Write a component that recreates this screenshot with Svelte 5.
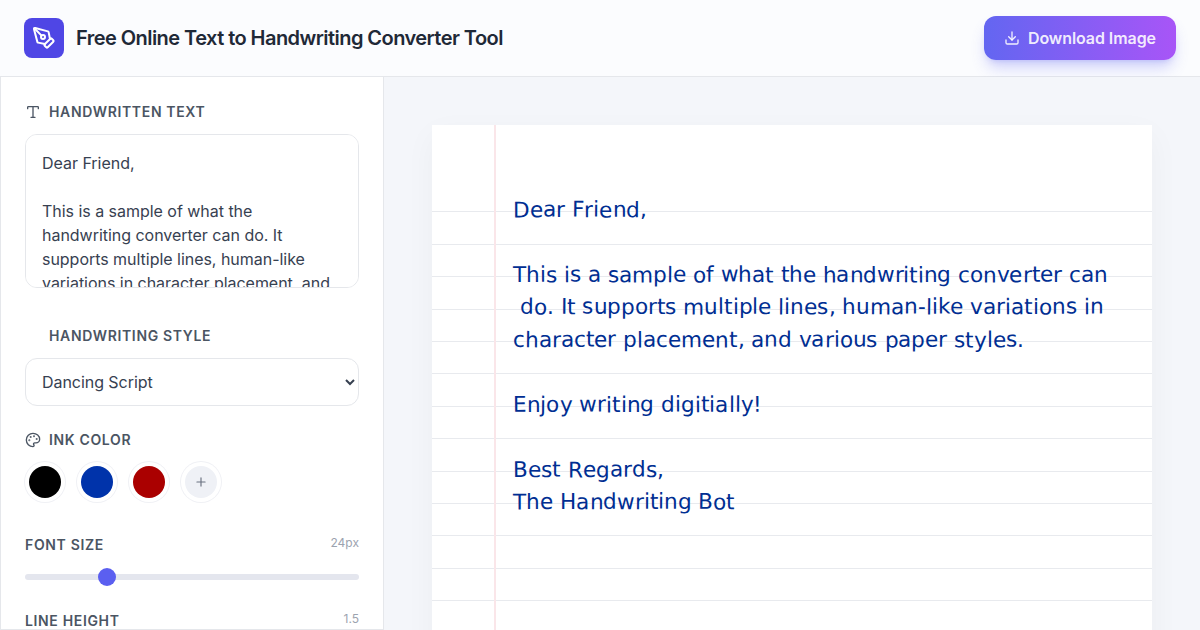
<script>
  let text = $state(`Dear Friend,

This is a sample of what the handwriting converter can do. It supports multiple lines, human-like variations in character placement, and various paper styles.

Enjoy writing digitially!

Best Regards,
The Handwriting Bot`)
  let fontSize = $state(24)
  let lineHeight = $state(1.5)
  let ink = $state('#002e92')
  const swatches = ['#000000', '#0033aa', '#aa0000']

  const paperLines = [
    { text: 'Dear Friend,', dy: -1, dx: 0 },
    { text: '', dy: 0, dx: 0 },
    { text: 'This is a sample of what the handwriting converter can', dy: 0, dx: -0.035 },
    { text: ' do. It supports multiple lines, human-like variations in', dy: -1, dx: 0 },
    { text: 'character placement, and various paper styles.', dy: 0, dx: -0.02 },
    { text: '', dy: 0, dx: 0 },
    { text: 'Enjoy writing digitially!', dy: 0, dx: 0.04 },
    { text: '', dy: 0, dx: 0 },
    { text: 'Best Regards,', dy: 0, dx: 0 },
    { text: 'The Handwriting Bot', dy: 0, dx: 0 }
  ]

  // small stable wobble per character, so the text looks hand placed
  function wobble(line, i) {
    const a = Math.sin((line + 1) * 12.9898 + i * 78.233) * 43758.5453
    const b = Math.sin((line + 1) * 39.346 + i * 11.135) * 24634.6345
    return { y: ((a - Math.floor(a)) - 0.5) * 1, r: ((b - Math.floor(b)) - 0.5) * 1.2 }
  }
</script>

<div class="app">
  <header class="topbar">
    <div class="brand">
      <div class="logo">
        <svg viewBox="0 0 24 24" width="24" height="24" fill="none" stroke="currentColor" stroke-width="2" stroke-linecap="round" stroke-linejoin="round">
          <path d="M15.707 21.293a1 1 0 0 1-1.414 0l-1.586-1.586a1 1 0 0 1 0-1.414l5.586-5.586a1 1 0 0 1 1.414 0l1.586 1.586a1 1 0 0 1 0 1.414z"/>
          <path d="m18 13-1.375-6.874a1 1 0 0 0-.746-.776L3.235 2.028a1 1 0 0 0-1.207 1.207L5.35 15.879a1 1 0 0 0 .776.746L13 18"/>
          <path d="m2.3 2.3 7.286 7.286"/>
          <circle cx="11" cy="11" r="2"/>
        </svg>
      </div>
      <h1>Free Online Text to Handwriting Converter Tool</h1>
    </div>
    <button class="download">
      <svg viewBox="0 0 24 24" width="16" height="16" fill="none" stroke="currentColor" stroke-width="2" stroke-linecap="round" stroke-linejoin="round">
        <path d="M21 15v4a2 2 0 0 1-2 2H5a2 2 0 0 1-2-2v-4"/>
        <polyline points="7 10 12 15 17 10"/>
        <line x1="12" x2="12" y1="15" y2="3"/>
      </svg>
      Download Image
    </button>
  </header>

  <div class="body">
    <aside class="sidebar">
      <section class="group text-group">
        <div class="label">
          <svg viewBox="0 0 24 24" width="16" height="16" fill="none" stroke="currentColor" stroke-width="2" stroke-linecap="round" stroke-linejoin="round">
            <path d="M12 4v16"/>
            <path d="M4 7V5a1 1 0 0 1 1-1h14a1 1 0 0 1 1 1v2"/>
            <path d="M9 20h6"/>
          </svg>
          <span>Handwritten Text</span>
        </div>
        <textarea bind:value={text}></textarea>
      </section>

      <section class="group">
        <div class="label">
          <span class="icon-gap"></span>
          <span>Handwriting Style</span>
        </div>
        <select>
          <option>Dancing Script</option>
          <option>Caveat</option>
          <option>Indie Flower</option>
        </select>
      </section>

      <section class="group">
        <div class="label">
          <svg viewBox="0 0 24 24" width="16" height="16" fill="none" stroke="currentColor" stroke-width="2" stroke-linecap="round" stroke-linejoin="round">
            <circle cx="13.5" cy="6.5" r=".5" fill="currentColor"/>
            <circle cx="17.5" cy="10.5" r=".5" fill="currentColor"/>
            <circle cx="8.5" cy="7.5" r=".5" fill="currentColor"/>
            <circle cx="6.5" cy="12.5" r=".5" fill="currentColor"/>
            <path d="M12 2C6.5 2 2 6.5 2 12s4.5 10 10 10c.926 0 1.648-.746 1.648-1.688 0-.437-.18-.835-.437-1.125-.29-.289-.438-.652-.438-1.125a1.64 1.64 0 0 1 1.668-1.668h1.996c3.051 0 5.555-2.503 5.555-5.554C21.965 6.012 17.461 2 12 2z"/>
          </svg>
          <span>Ink Color</span>
        </div>
        <div class="swatches">
          {#each swatches as c}
            <button class="swatch" style:background={c} aria-label={c} onclick={() => (ink = c)}></button>
          {/each}
          <button class="swatch add" aria-label="Custom color">
            <svg viewBox="0 0 24 24" width="14" height="14" fill="none" stroke="currentColor" stroke-width="2" stroke-linecap="round">
              <path d="M5 12h14"/>
              <path d="M12 5v14"/>
            </svg>
          </button>
        </div>
      </section>

      <section class="group slider">
        <div class="slider-head">
          <span class="label plain">Font Size</span>
          <span class="value">{fontSize}px</span>
        </div>
        <input type="range" min="12" max="64" bind:value={fontSize} />
      </section>

      <section class="group slider">
        <div class="slider-head">
          <span class="label plain">Line Height</span>
          <span class="value">{lineHeight}</span>
        </div>
        <input type="range" min="1" max="3" step="0.1" bind:value={lineHeight} />
      </section>
    </aside>

    <main class="stage">
      <div class="paper">
        <div class="writing">
          {#each paperLines as line, l}
            <div class="line" style:color={ink} style:transform="translateY({line.dy}px)" style:letter-spacing="{line.dx}px">
              {#each line.text.split('') as ch, i}
                {@const w = wobble(l, i)}
                <span class="ch" style:transform="translateY({w.y}px) rotate({w.r}deg)">{ch}</span>
              {/each}
            </div>
          {/each}
        </div>
      </div>
    </main>
  </div>
</div>

<style>
  :global(body) {
    margin: 0;
    font-family: Inter, "Liberation Sans", sans-serif;
    overflow: hidden;
  }

  .app {
    width: 1200px;
    height: 630px;
    display: flex;
    flex-direction: column;
    overflow: hidden;
    background: #f4f6fa;
  }

  .topbar {
    height: 76px;
    flex: none;
    display: flex;
    align-items: center;
    justify-content: space-between;
    padding: 0 24px;
    background: #fbfcfe;
    border-bottom: 1px solid #e5e7eb;
  }

  .brand {
    display: flex;
    align-items: center;
    gap: 12px;
  }

  .logo {
    width: 40px;
    height: 40px;
    border-radius: 8px;
    background: #4f46e5;
    color: #fff;
    display: flex;
    align-items: center;
    justify-content: center;
  }

  h1 {
    margin: 0;
    font-size: 20px;
    font-weight: 600;
    letter-spacing: -0.55px;
    color: #1f2937;
  }

  .download {
    display: flex;
    align-items: center;
    gap: 8px;
    height: 44px;
    padding: 0 20px;
    border: none;
    border-radius: 12px;
    font: 600 16px Inter, sans-serif;
    letter-spacing: -0.07px;
    color: rgba(255, 255, 255, 0.9);
    background: linear-gradient(90deg, #6366f1, #a855f7);
    box-shadow: 0 10px 15px -3px rgba(99, 102, 241, 0.3), 0 4px 6px -4px rgba(99, 102, 241, 0.3);
  }

  .body {
    flex: 1;
    display: flex;
    min-height: 0;
  }

  .sidebar {
    width: 384px;
    flex: none;
    box-sizing: border-box;
    padding: 25px 24px 24px;
    background: #fff;
    border: 1px solid #e5e7eb;
    border-width: 0 1px 1px 1px;
    overflow: hidden;
    display: flex;
    flex-direction: column;
    gap: 24px;
  }

  .label {
    display: flex;
    align-items: center;
    gap: 8px;
    font-size: 14px;
    font-weight: 600;
    letter-spacing: 0.65px;
    text-transform: uppercase;
    color: #4b5563;
    line-height: 20px;
  }

  .label svg {
    color: #4b5563;
  }

  .icon-gap {
    width: 16px;
  }

  .group > .label {
    margin-bottom: 12px;
  }

  .text-group {
    margin-bottom: 14px;
  }

  textarea {
    display: block;
    width: 100%;
    height: 154px;
    box-sizing: border-box;
    padding: 16px;
    border: 1px solid #e5e7eb;
    border-radius: 12px;
    font: 400 16px/24px Inter, sans-serif;
    letter-spacing: -0.03px;
    color: #374151;
    resize: none;
    outline: none;
    scrollbar-width: none;
  }

  select {
    display: block;
    width: 100%;
    height: 48px;
    box-sizing: border-box;
    padding: 0 12px;
    border: 1px solid #e5e7eb;
    border-radius: 12px;
    background: #fff;
    font: 400 16px Inter, sans-serif;
    letter-spacing: -0.05px;
    color: #374151;
    outline: none;
  }

  .swatches {
    display: flex;
    gap: 12px;
    padding: 4px 4px 5px;
    margin-bottom: 8px;
  }

  .swatch {
    width: 32px;
    height: 32px;
    padding: 0;
    border: none;
    border-radius: 50%;
    box-shadow: 0 0 0 4px #fff, 0 0 0 5px #f0f1f5;
    margin-right: 8px;
  }

  .add {
    background: #eff1f6;
    color: #6b7280;
    display: flex;
    align-items: center;
    justify-content: center;
  }

  .slider {
    margin-bottom: 7px;
  }

  .slider-head {
    display: flex;
    justify-content: space-between;
    align-items: flex-start;
  }

  .value {
    font-size: 12px;
    color: #9ca3af;
    line-height: 16px;
  }

  input[type="range"] {
    -webkit-appearance: none;
    appearance: none;
    display: block;
    width: 100%;
    height: 6px;
    margin: 19px 0 0;
    border-radius: 3px;
    background: #e4e6ee;
  }

  input[type="range"]::-webkit-slider-thumb {
    -webkit-appearance: none;
    width: 18px;
    height: 18px;
    border-radius: 50%;
    background: #5b5ff0;
  }

  .stage {
    flex: 1;
    min-width: 0;
    padding: 48px;
    background: #f4f6fa;
    overflow: hidden;
  }

  .paper {
    width: 720px;
    height: 1018px;
    box-sizing: border-box;
    padding: 69.5px 0 0 81px;
    background-color: #fff;
    background-image:
      linear-gradient(90deg, transparent 62px, #fae6e9 62px, #fae6e9 64px, transparent 64px),
      repeating-linear-gradient(180deg, transparent 0, transparent 31.4px, #e8eaee 31.4px, #e8eaee 32.4px);
    background-position: 0 0, 0 55px;
    background-repeat: no-repeat;
    box-shadow: 0 10px 30px rgba(0, 0, 0, 0.04);
  }

  .writing {
    font-family: "DejaVu Sans", sans-serif;
    font-size: 21.6px;
    line-height: 32.4px;
  }

  .line {
    height: 32.4px;
    white-space: pre;
  }

  .ch {
    display: inline-block;
    white-space: pre;
  }
</style>
